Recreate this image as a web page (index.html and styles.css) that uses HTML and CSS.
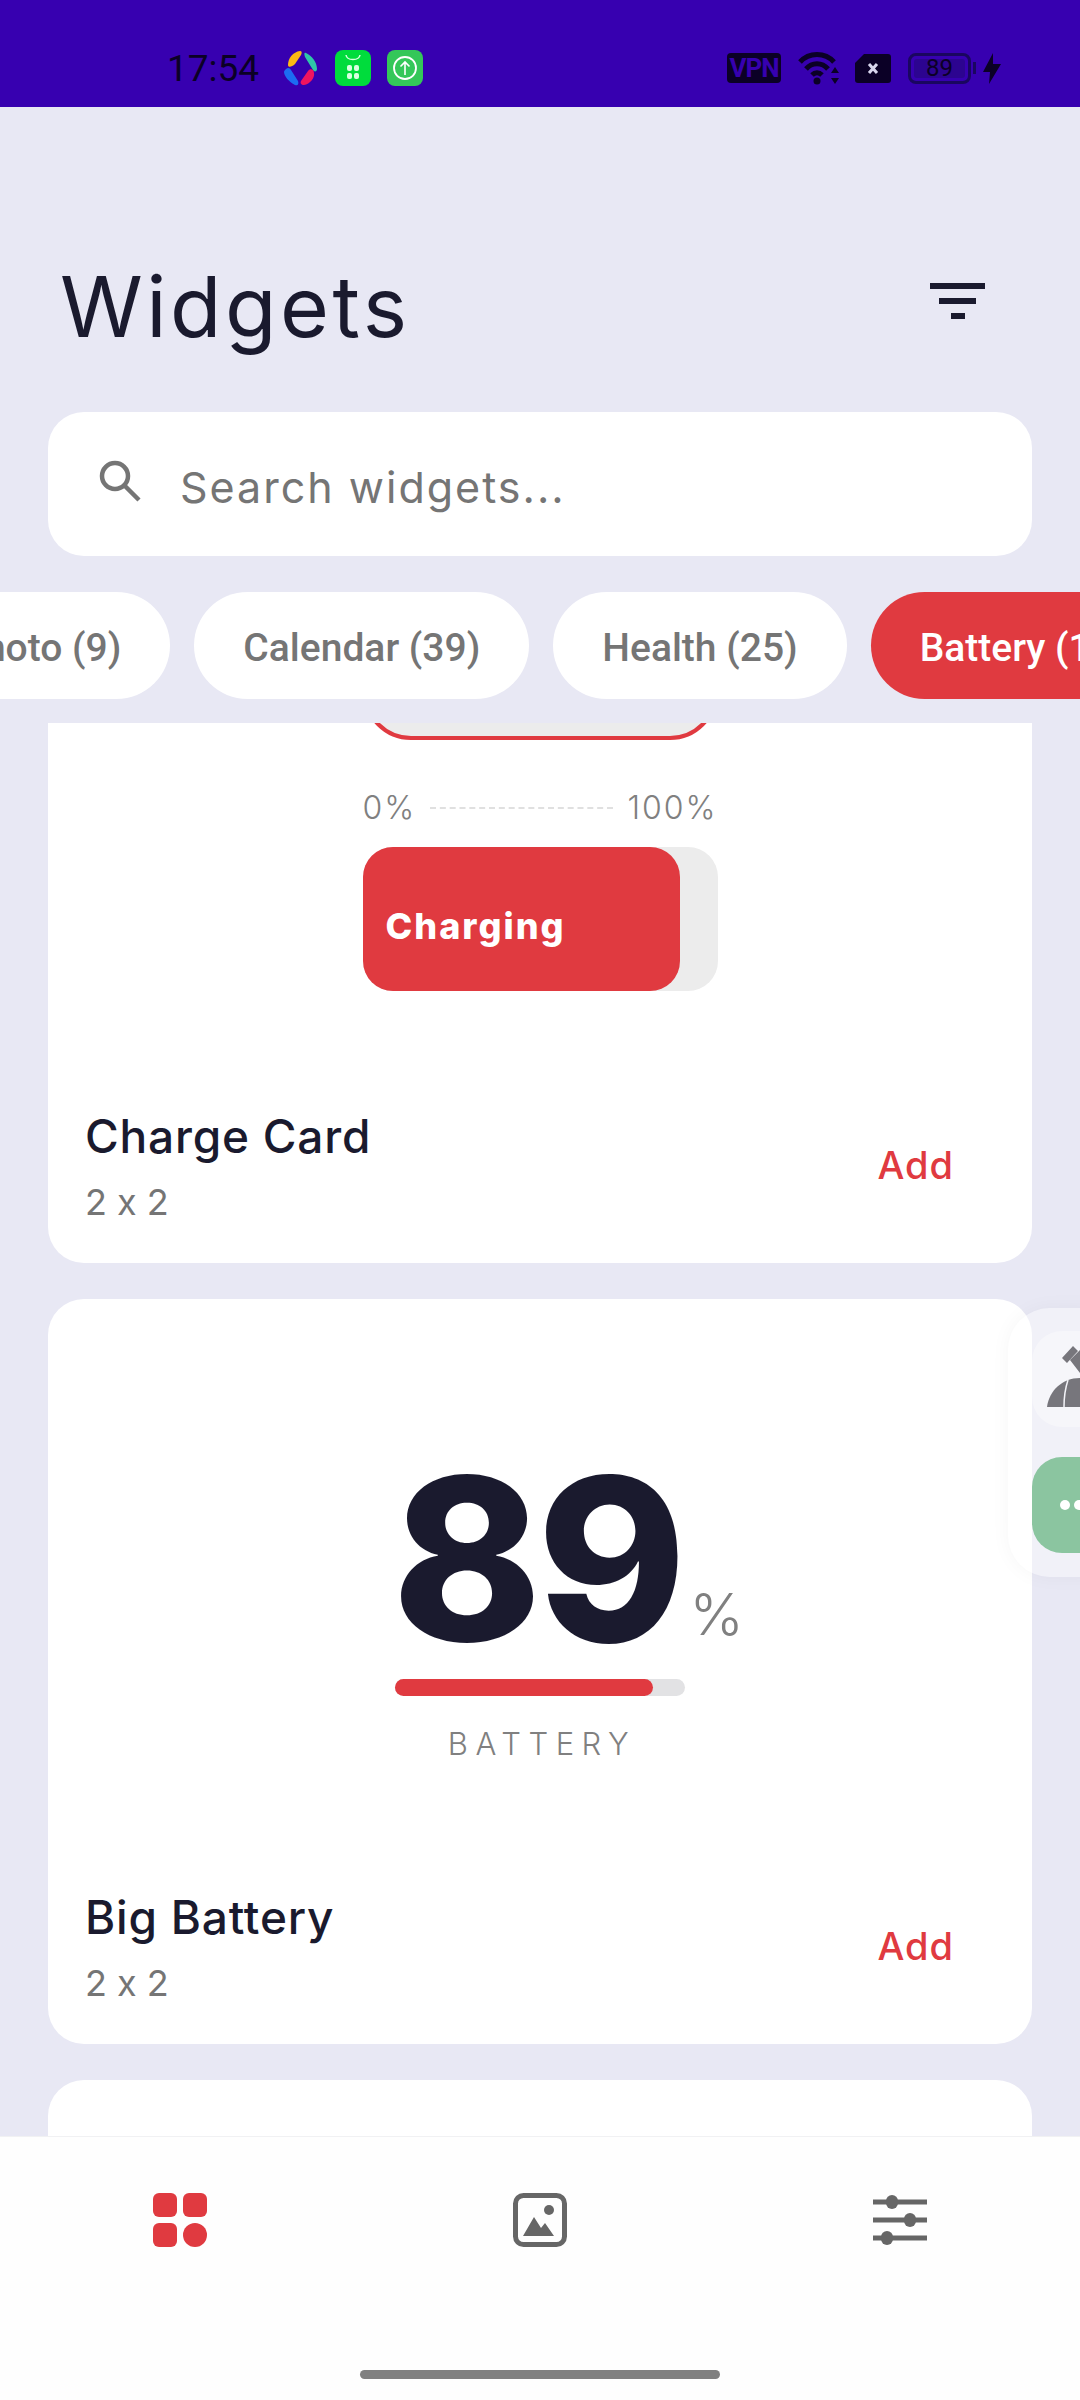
FILE: index.html
```html
<!DOCTYPE html>
<html lang="en">
<head>
    <meta charset="UTF-8">
    <meta name="viewport" content="width=device-width, initial-scale=1.0">
    <title>Widgets</title>
    <link rel="stylesheet" href="styles.css">
</head>
<body>
    <div class="page">
        <div class="status-bar">
            <span class="time">17:54</span>
            <svg class="app-icon logo" viewBox="0 0 36 36">
                <path d="M5 15C5 8 10 2 17 1c2 0 2 2 1 4l-6 9c-3 3-7 4-7 1z" fill="#fdb913"/>
                <path d="M23 3c6 3 11 9 11 16 0 3-3 3-4 1l-8-13c-1-3-1-5 1-4z" fill="#2fc6a8"/>
                <path d="M3 19c2-2 4-1 5 1l7 11c1 3 0 5-3 4C6 32 1 26 1 22c0-1 1-2 2-3z" fill="#1c6cf2"/>
                <path d="M31 23c1 5-4 11-10 12-3 0-4-2-3-4l7-10c2-3 6-2 6 2z" fill="#f0145f"/>
            </svg>
            <svg class="app-icon" viewBox="0 0 36 36">
                <rect width="36" height="36" rx="8" fill="#00dc3c"/>
                <path d="M11 5c1 6 13 6 14 0" fill="none" stroke="#d8ffe0" stroke-width="1.5"/>
                <rect x="12" y="15" width="5" height="6" rx="2" fill="#d8ffe0"/>
                <rect x="19" y="15" width="5" height="6" rx="2" fill="#d8ffe0"/>
                <rect x="12" y="23" width="5" height="6" rx="2" fill="#d8ffe0"/>
                <rect x="19" y="23" width="5" height="6" rx="2" fill="#d8ffe0"/>
            </svg>
            <svg class="app-icon" viewBox="0 0 36 36">
                <rect width="36" height="36" rx="8" fill="#34c759"/>
                <circle cx="18" cy="18" r="11" fill="none" stroke="#fff" stroke-width="1.8"/>
                <path d="M18 25V12M13.5 16.5L18 12l4.5 4.5" fill="none" stroke="#fff" stroke-width="1.6"/>
            </svg>
            <div class="status-right">
                <span class="vpn">VPN</span>
                <svg class="wifi" viewBox="0 0 42 34">
                    <path d="M2 11C11 1 27 1 36 11" fill="none" stroke="#0b0026" stroke-width="5"/>
                    <path d="M8 18C14 11 24 11 30 18" fill="none" stroke="#0b0026" stroke-width="5"/>
                    <path d="M14 24C17 21 21 21 24 24" fill="none" stroke="#0b0026" stroke-width="5"/>
                    <circle cx="19" cy="30" r="3.5" fill="#0b0026"/>
                    <path d="M37 16l4 6h-8zM37 33l4-6h-8z" fill="#0b0026"/>
                </svg>
                <svg class="sim" viewBox="0 0 36 29">
                    <path d="M9 0h24a3 3 0 0 1 3 3v23a3 3 0 0 1-3 3H3a3 3 0 0 1-3-3V9z" fill="#0b0026"/>
                    <path d="M14 10l8 9M22 10l-8 9" stroke="#d9d6ee" stroke-width="3"/>
                </svg>
                <div class="battery-status">
                    <div class="battery-shell"><span class="battery-level">89</span></div>
                    <span class="battery-tip"></span>
                </div>
                <svg class="bolt" viewBox="0 0 18 31"><path d="M10 0L0 19h7l-1 12L18 11h-8z" fill="#0b0026"/></svg>
            </div>
        </div>

        <div class="header">
            <h1>Widgets</h1>
            <div class="filter-icon"><span></span><span></span><span></span></div>
        </div>

        <div class="search-box">
            <svg class="search-icon" viewBox="0 0 44 44">
                <circle cx="17" cy="17" r="13" fill="none" stroke="#757575" stroke-width="4.5"/>
                <path d="M26 26l15 15" stroke="#757575" stroke-width="4.5"/>
            </svg>
            <span class="search-text">Search widgets...</span>
        </div>

        <div class="chips">
            <div class="chip">Photo (9)</div>
            <div class="chip">Calendar (39)</div>
            <div class="chip">Health (25)</div>
            <div class="chip active">Battery (12)</div>
        </div>

        <div class="list">
            <div class="list-inner">
                <div class="card">
                    <div class="preview charge-preview">
                        <div class="top-tile"></div>
                        <div class="scale">
                            <span>0%</span>
                            <i></i>
                            <span>100%</span>
                        </div>
                        <div class="charge-bar">
                            <div class="charge-fill">Charging</div>
                        </div>
                    </div>
                    <div class="card-footer">
                        <div>
                            <div class="card-title">Charge Card</div>
                            <div class="card-size">2 x 2</div>
                        </div>
                        <span class="add">Add</span>
                    </div>
                </div>

                <div class="card">
                    <div class="preview big-preview">
                        <div class="big-widget">
                            <div class="big-number"><b>89</b><span>%</span></div>
                            <div class="big-bar"><div class="big-fill"></div></div>
                            <div class="big-label">BATTERY</div>
                        </div>
                    </div>
                    <div class="card-footer">
                        <div>
                            <div class="card-title">Big Battery</div>
                            <div class="card-size">2 x 2</div>
                        </div>
                        <span class="add">Add</span>
                    </div>
                </div>

                <div class="card"></div>
            </div>
        </div>

        <div class="bottom-nav">
            <div class="nav-icons">
                <svg viewBox="0 0 54 54">
                    <rect width="24" height="24" rx="6" fill="#e03a40"/>
                    <rect x="30" width="24" height="24" rx="6" fill="#e03a40"/>
                    <rect y="30" width="24" height="24" rx="6" fill="#e03a40"/>
                    <circle cx="42" cy="42" r="12" fill="#e03a40"/>
                </svg>
                <svg viewBox="0 0 54 54">
                    <rect x="2.500" y="2.500" width="49" height="49" rx="8" fill="none" stroke="#666" stroke-width="5"/>
                    <circle cx="36" cy="17" r="5" fill="#666"/>
                    <path d="M10 43l11-19 7 11 4-5 9 13z" fill="#666"/>
                </svg>
                <svg viewBox="0 0 54 54">
                    <path d="M0 9h54M0 27h54M0 45h54" stroke="#666" stroke-width="5" stroke-linecap="round"/>
                    <rect x="13" y="2" width="12" height="14" rx="6" fill="#666"/>
                    <rect x="31" y="20" width="12" height="14" rx="6" fill="#666"/>
                    <rect x="8" y="38" width="12" height="14" rx="6" fill="#666"/>
                </svg>
            </div>
            <div class="home-indicator"></div>
        </div>

        <div class="side-panel">
            <div class="side-tile">
                <svg viewBox="0 0 48 96">
                    <path d="M30 27l11-12 5 5-11 12zM38 29l10-10v23z" fill="#77767c"/>
                    <path d="M15 76C17 60 30 47 48 47V76z" fill="#77767c"/>
                    <path d="M32 76C32 66 33 58 36 49" fill="none" stroke="#f3f3f8" stroke-width="1.500"/>
                </svg>
            </div>
            <div class="side-tile green"><span></span><span></span></div>
        </div>
    </div>
</body>
</html>
```

FILE: styles.css
```css
* {
    box-sizing: border-box;
}
body {
    margin: 0;
    font-family: Inter, sans-serif;
    font-feature-settings: "calt" 0;
    background-color: #e8e8f4;
    overflow: hidden;
}
.page {
    position: relative;
    width: 1080px;
    height: 2400px;
    display: flex;
    flex-direction: column;
    overflow: hidden;
}

/* status bar */
.status-bar {
    height: 107px;
    flex: none;
    background-color: #3700b0;
    display: flex;
    align-items: center;
    padding: 29px 79px 0 167px;
    color: #0b0026;
}
.time {
    font-family: Roboto, sans-serif;
    font-size: 37px;
    width: 116px;
}
.app-icon {
    width: 36px;
    height: 36px;
    margin-right: 16px;
}
.status-right {
    margin-left: auto;
    display: flex;
    align-items: center;
}
.vpn {
    width: 54px;
    height: 30px;
    border-radius: 4px;
    background-color: #0b0026;
    color: #3700b0;
    font-family: Roboto, sans-serif;
    font-weight: 700;
    font-size: 26px;
    line-height: 31px;
    letter-spacing: -1px;
    text-align: center;
    margin-right: 17px;
}
.wifi {
    width: 42px;
    height: 34px;
    margin-right: 15px;
}
.sim {
    width: 36px;
    height: 29px;
    margin-right: 17px;
}
.battery-status {
    display: flex;
    align-items: center;
    margin-right: 7px;
}
.battery-shell {
    width: 63px;
    height: 31px;
    border: 3px solid #1a0660;
    border-radius: 8px;
    padding: 3px;
    display: flex;
}
.battery-level {
    flex: 1;
    background-color: #2c0490;
    border-radius: 3px;
    font-family: Roboto, sans-serif;
    font-size: 24px;
    line-height: 19px;
    text-align: center;
}
.battery-tip {
    width: 3px;
    height: 12px;
    margin-left: 2px;
    background-color: #1a0660;
}
.bolt {
    width: 18px;
    height: 31px;
}

/* header */
.header {
    height: 305px;
    flex: none;
    display: flex;
    justify-content: space-between;
    padding: 150px 95px 0 60px;
}
h1 {
    margin: 0;
    font-weight: 400;
    font-size: 84px;
    line-height: 100px;
    letter-spacing: 3.500px;
    color: #1a1a2e;
}
.filter-icon {
    width: 55px;
    margin-top: 26px;
    display: flex;
    flex-direction: column;
    align-items: center;
    gap: 9px;
}
.filter-icon span {
    display: block;
    height: 6px;
    width: 55px;
    background-color: #1a1a2e;
}
.filter-icon span:nth-child(2) {
    width: 37px;
}
.filter-icon span:nth-child(3) {
    width: 14px;
}

/* search */
.search-box {
    flex: none;
    margin: 0 48px;
    height: 144px;
    background-color: #fff;
    border-radius: 36px;
    display: flex;
    align-items: center;
    padding-left: 50px;
    font-size: 43px;
    letter-spacing: 2px;
    color: #757575;
}
.search-icon {
    width: 44px;
    height: 44px;
    margin-right: 38px;
    margin-top: -6px;
}
.search-text {
    padding-top: 6px;
}

/* chips */
.chips {
    flex: none;
    display: flex;
    gap: 24px;
    margin-top: 36px;
    margin-left: -90px;
    width: 1400px;
}
.chip {
    height: 107px;
    padding: 0 49px;
    border-radius: 54px;
    background-color: #fff;
    color: #757575;
    font-family: Roboto, sans-serif;
    font-weight: 500;
    font-size: 39px;
    line-height: 112px;
    white-space: nowrap;
}
.chip.active {
    background-color: #e03a40;
    color: #fff;
}

/* list */
.list {
    flex: 1;
    margin-top: 24px;
    overflow: hidden;
}
.list-inner {
    margin-top: -205px;
    display: flex;
    flex-direction: column;
    gap: 36px;
    padding: 0 48px;
}
.card {
    flex: none;
    height: 745px;
    background-color: #fff;
    border-radius: 36px;
    display: flex;
    flex-direction: column;
}
.preview {
    height: 585px;
    display: flex;
    flex-direction: column;
    align-items: center;
}
.card-footer {
    display: flex;
    justify-content: space-between;
    align-items: center;
    padding: 0 78px 0 37px;
}
.card-title {
    font-weight: 500;
    font-size: 46px;
    line-height: 66px;
    letter-spacing: 0.800px;
    color: #1a1a2e;
}
.card-size {
    font-size: 36px;
    line-height: 50px;
    margin-top: 8px;
    color: #757575;
}
.add {
    font-weight: 500;
    font-size: 38px;
    letter-spacing: 1px;
    color: #e03a40;
}

/* charge card */
.charge-preview {
    padding-top: 60px;
}
.top-tile {
    width: 355px;
    height: 162px;
    background-color: #ececec;
    border: 4px solid #e03a40;
    border-radius: 48px;
}
.scale {
    width: 355px;
    margin-top: 48px;
    display: flex;
    align-items: center;
    justify-content: space-between;
    font-weight: 300;
    font-size: 32px;
    line-height: 40px;
    letter-spacing: 2px;
    color: #808080;
}
.scale i {
    flex: 1;
    margin: 0 14px;
    border-top: 2px dashed #e0e0e0;
}
.charge-bar {
    width: 355px;
    height: 144px;
    margin-top: 19px;
    border-radius: 30px;
    background-color: #ececec;
}
.charge-fill {
    width: 317px;
    height: 144px;
    border-radius: 30px;
    background-color: #e03a40;
    color: #fff;
    font-weight: 800;
    font-size: 36px;
    line-height: 158px;
    letter-spacing: 2px;
    padding-left: 23px;
}

/* big battery */
.big-preview {
    padding-top: 149px;
}
.big-widget {
    width: 290px;
}
.big-number {
    display: flex;
    align-items: flex-end;
    height: 222px;
    white-space: nowrap;
}
.big-number b {
    font-weight: 800;
    font-size: 226px;
    line-height: 222px;
    letter-spacing: -5px;
    margin-left: -3px;
    color: #1a1a2e;
}
.big-number span {
    font-weight: 300;
    font-size: 58px;
    line-height: 60px;
    margin-left: 8px;
    margin-bottom: 26px;
    color: #808080;
}
.big-bar {
    height: 17px;
    margin-top: 9px;
    border-radius: 9px;
    background-color: #e2e2e4;
}
.big-fill {
    width: 258px;
    height: 17px;
    border-radius: 9px;
    background-color: #e03a40;
}
.big-label {
    margin-top: 29px;
    padding-left: 4px;
    font-weight: 300;
    font-size: 31px;
    line-height: 38px;
    letter-spacing: 7.500px;
    text-align: center;
    color: #808080;
}

/* bottom nav */
.bottom-nav {
    flex: none;
    position: relative;
    height: 264px;
    background-color: #fefefe;
    border-top: 1px solid #f1f1f3;
    padding-top: 56px;
}
.nav-icons {
    display: grid;
    grid-template-columns: repeat(3, 360px);
    justify-items: center;
}
.nav-icons svg {
    width: 54px;
    height: 54px;
}
.home-indicator {
    width: 360px;
    height: 9px;
    margin: 123px auto 0;
    border-radius: 5px;
    background-color: #808080;
}

/* floating side panel */
.side-panel {
    position: absolute;
    left: 1008px;
    top: 1308px;
    width: 120px;
    height: 269px;
    padding: 23px 0 0 24px;
    border-radius: 42px;
    background-color: rgba(255, 255, 255, 0.4);
    box-shadow: 0 0 20px rgba(0, 0, 0, 0.04);
    display: flex;
    flex-direction: column;
    gap: 30px;
}
.side-tile {
    width: 96px;
    height: 96px;
    border-radius: 30px;
    background-color: rgba(255, 255, 255, 0.35);
}
.side-tile svg {
    display: block;
    width: 48px;
    height: 96px;
}
.side-tile.green {
    background-color: #8bc5a0;
    display: flex;
    align-items: center;
    gap: 4px;
    padding-left: 28px;
}
.side-tile.green span {
    width: 10px;
    height: 10px;
    border-radius: 50%;
    background-color: #fff;
}
```
